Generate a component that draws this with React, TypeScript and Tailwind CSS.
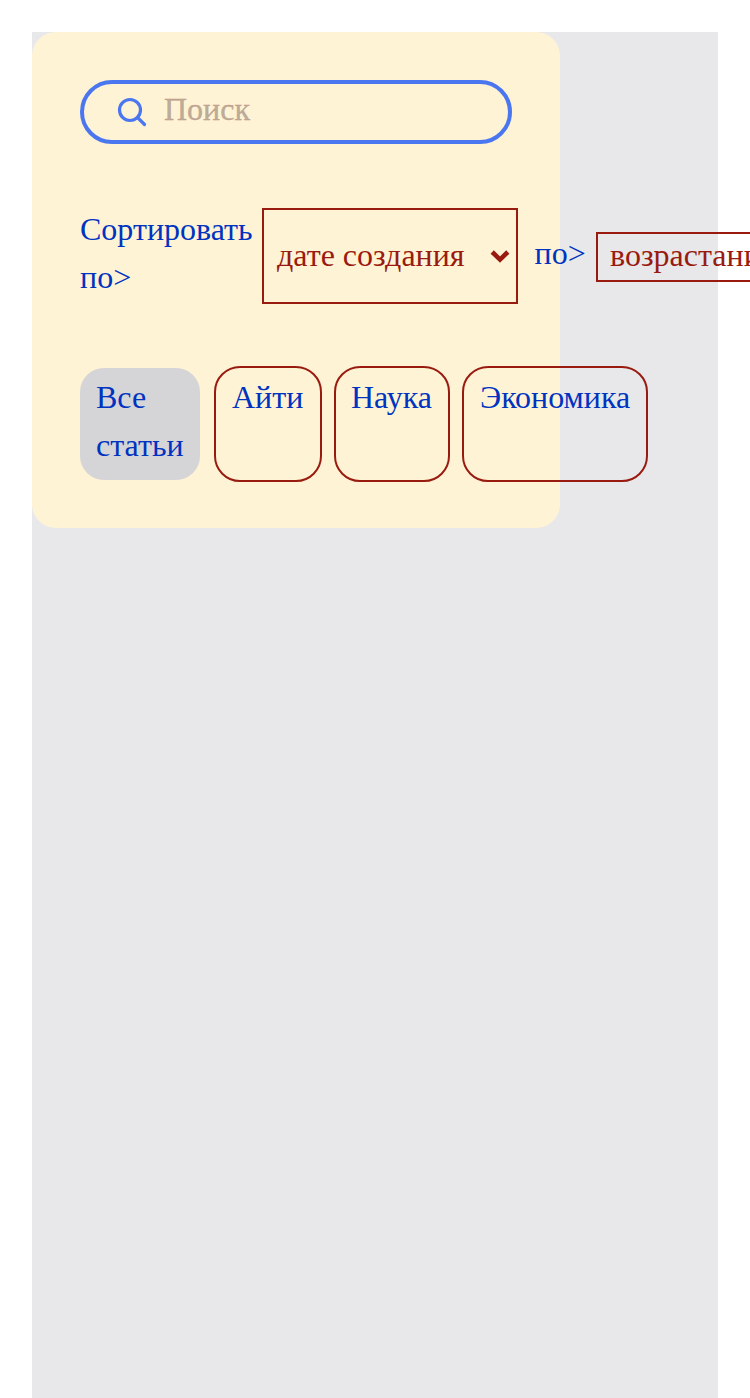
import React from "react";

function SearchIcon() {
  return (
    <svg className="h-8 w-8 shrink-0" viewBox="0 0 32 32" fill="none" stroke="#4a77f0" strokeWidth="3.2">
      <circle cx="14" cy="14" r="10.5" />
      <path d="M21.5 21.5 L28.5 28.5" strokeLinecap="round" />
    </svg>
  );
}

function SelectBox({ label, className, labelClassName }: { label: string; className: string; labelClassName: string }) {
  return (
    <button
      type="button"
      className={`flex shrink-0 items-center justify-between border-2 border-[#991b10] pr-[6px] whitespace-nowrap text-[#991b10] ${className}`}
    >
      <span className={labelClassName}>{label}</span>
      <svg className="h-5 w-5 shrink-0" viewBox="0 0 20 20" fill="none" stroke="#991b10" strokeWidth="4.6">
        <path d="M2.2 6 L10 13.6 L17.8 6" />
      </svg>
    </button>
  );
}

function Tag({ label, className }: { label: string; className: string }) {
  return (
    <div className={`h-29 shrink-0 rounded-[26px] border-2 border-[#991b10] pt-[5px] ${className}`}>
      {label}
    </div>
  );
}

export default function App() {
  return (
    <div className="h-[1398px] w-[750px] overflow-hidden bg-white px-8 pt-8 font-['Liberation_Serif',serif] text-[32px] leading-[48px] text-[#0033c0]">
      <main className="h-full w-full bg-[#e8e8ea]">
        <section className="h-124 w-132 rounded-3xl bg-[#fff3d6] px-12 pt-12">
          <label className="flex h-16 w-full items-center rounded-full border-4 border-[#4a77f0] pl-8">
            <SearchIcon />
            <input
              type="text"
              placeholder="Поиск"
              className="ml-4 h-10 w-64 bg-transparent pb-1.5 text-[32px] leading-9 outline-none [-webkit-text-stroke:0.3px_#c69482] placeholder:text-[#b9ae99]"
            />
          </label>

          <div className="mt-16 flex h-24 items-center">
            <div className="w-[182px] shrink-0 pb-1.5">Сортировать по&gt;</div>
            <SelectBox label="дате создания" className="h-24 w-64 pl-[13px]" labelClassName="pb-0.5" />
            <div className="ml-4 w-[62px] shrink-0 pb-1.5 pl-[0.5px]">по&gt;</div>
            <SelectBox label="возрастанию" className="mt-0.5 h-[50px] w-[244px] pl-3" labelClassName="-mt-0.5 pb-0.5" />
          </div>

          <div className="mt-[62px] flex items-center">
            <div className="mr-[14px] h-28 w-30 shrink-0 rounded-3xl bg-[#d5d5d8] px-4 pt-[5px]">Все статьи</div>
            <Tag label="Айти" className="mr-3 w-27 pl-4" />
            <Tag label="Наука" className="mr-3 w-29 pl-[15px]" />
            <Tag label="Экономика" className="w-[186px] pl-4" />
          </div>
        </section>
      </main>
    </div>
  );
}
